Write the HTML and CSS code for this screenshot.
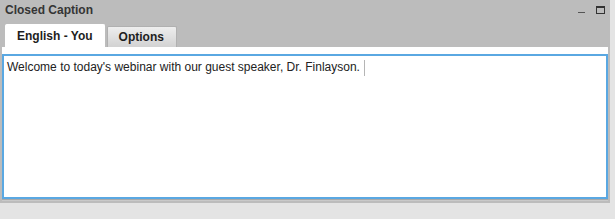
FILE: index.html
```html
<!DOCTYPE html>
<html>
<head>
  <title>Closed Caption</title>
  <link rel="stylesheet" href="styles.css">
</head>
<body>
  <div class="window">
    <div class="titlebar">
      <span class="title">Closed Caption</span>
      <div class="controls">
        <span class="minimize"></span>
        <span class="maximize"></span>
      </div>
    </div>
    <div class="tabs">
      <div class="tab active">English - You</div>
      <div class="tab">Options</div>
    </div>
    <div class="content">
      <div class="caption-box">
        <span class="caption-text">Welcome to today's webinar with our guest speaker, Dr. Finlayson.</span><span class="caret"></span>
      </div>
    </div>
  </div>
</body>
</html>
```

FILE: styles.css
```css
body {
  margin: 0;
  width: 615px;
  height: 219px;
  background-color: #e4e4e4;
  font-family: "Liberation Sans", Arial, sans-serif;
  overflow: hidden;
}
.window {
  width: 610px;
  height: 203px;
  background-color: #bcbcbc;
}
.titlebar {
  height: 22px;
  display: flex;
  align-items: center;
  justify-content: space-between;
  padding: 0 5px 0 5px;
}
.title {
  font-size: 12px;
  font-weight: bold;
  color: #353535;
  margin-top: -2px;
}
.controls {
  display: flex;
  align-items: flex-end;
  gap: 11px;
  margin-top: -3px;
}
.minimize {
  width: 7px;
  height: 1px;
  background-color: #555;
  margin-bottom: 1px;
}
.maximize {
  width: 7px;
  height: 5px;
  border: 1px solid #333;
  border-top-width: 2px;
}
.tabs {
  display: flex;
  align-items: flex-end;
  gap: 2px;
  padding-left: 5px;
  height: 25px;
}
.tab {
  font-size: 12px;
  font-weight: bold;
  color: #1e1e1e;
  padding: 0 12px 0 11px;
  height: 20px;
  line-height: 20px;
  border-radius: 2px 2px 0 0;
  background: linear-gradient(#eeeeee, #d2d2d2);
  border: 1px solid #b0b0b0;
  border-bottom: none;
}
.tab.active {
  background: #ffffff;
  border-color: #ffffff;
  height: 22px;
  line-height: 22px;
  padding: 0 11px;
}
.content {
  margin-left: 2px;
  width: 606px;
  background-color: #ffffff;
  padding-top: 7px;
}
.caption-box {
  height: 133px;
  border: 2px solid #5aa8e2;
  box-shadow: 0 1px 0 #a9a9a9, 0 2px 0 #c9c9c9;
  padding: 4px 3px;
  font-size: 12px;
  color: #222;
  line-height: 15px;
}
.caret {
  display: inline-block;
  width: 1px;
  height: 16px;
  background-color: #b5b5b5;
  vertical-align: top;
  margin-left: 4px;
}
```
